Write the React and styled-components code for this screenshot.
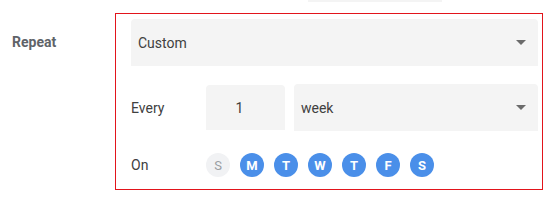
import React from "react";
import styled, { createGlobalStyle } from "styled-components";

const GlobalStyle = createGlobalStyle`
  body {
    margin: 0;
    background: #fff;
    font-family: Roboto, "Liberation Sans", Arial, sans-serif;
  }
`;

const days = [
  { l: "S", on: false },
  { l: "M", on: true },
  { l: "T", on: true },
  { l: "W", on: true },
  { l: "T", on: true },
  { l: "F", on: true },
  { l: "S", on: true },
];

function Caret() {
  return (
    <svg width="10" height="5" viewBox="0 0 10 5">
      <path d="M0 0 L10 0 L5 5 Z" fill="#6b6b6b" />
    </svg>
  );
}

export default function App() {
  return (
    <>
      <GlobalStyle />
      <TopStrip />
      <Page>
        <Label>Repeat</Label>
        <Box>
          <Select>
            <span>Custom</span>
            <Caret />
          </Select>
          <Row>
            <RowLabel>Every</RowLabel>
            <NumberInput>1</NumberInput>
            <Select $grow>
              <span>week</span>
              <Caret />
            </Select>
          </Row>
          <DayRow>
            <RowLabel>On</RowLabel>
            <Days>
              {days.map((d, i) => (
                <Day key={i} $on={d.on}>
                  {d.l}
                </Day>
              ))}
            </Days>
          </DayRow>
        </Box>
      </Page>
    </>
  );
}

const TopStrip = styled.div`
  position: absolute;
  top: 0;
  left: 308px;
  width: 134px;
  height: 2px;
  background: #f4f4f4;
`;

const Page = styled.div`
  display: flex;
  padding-top: 13px;
`;

const Label = styled.div`
  width: 103px;
  padding-left: 12px;
  padding-top: 21px;
  font-size: 14px;
  font-weight: 700;
  color: #5f6368;
`;

const Box = styled.div`
  width: 407px;
  border: 1px solid #e2141b;
  padding: 5px 4px 12px 15px;
  display: flex;
  flex-direction: column;
`;

const Select = styled.div`
  flex: ${(p) => (p.$grow ? 1 : "none")};
  height: 47px;
  background: #f4f4f4;
  border-radius: 4px 4px 0 0;
  display: flex;
  align-items: center;
  justify-content: space-between;
  padding: 0 12px 0 7px;
  font-size: 14px;
  color: #404040;
`;

const Row = styled.div`
  display: flex;
  align-items: center;
  margin-top: 18px;
`;

const RowLabel = styled.div`
  width: 75px;
  font-size: 14px;
  color: #404040;
`;

const NumberInput = styled.div`
  width: 79px;
  height: 45px;
  margin-right: 9px;
  padding-right: 12px;
  box-sizing: border-box;
  background: #f4f4f4;
  border-radius: 4px 4px 0 0;
  display: flex;
  align-items: center;
  justify-content: center;
  font-size: 14px;
  color: #404040;
`;

const DayRow = styled.div`
  display: flex;
  align-items: center;
  margin-top: 22px;
`;

const Days = styled.div`
  display: flex;
  gap: 10px;
`;

const Day = styled.div`
  width: 24px;
  height: 24px;
  border-radius: 50%;
  display: flex;
  align-items: center;
  justify-content: center;
  font-size: 13px;
  font-weight: ${(p) => (p.$on ? 700 : 400)};
  background: ${(p) => (p.$on ? "#4a8fe9" : "#f1f2f4")};
  color: ${(p) => (p.$on ? "#fff" : "#9a9ea3")};
`;
